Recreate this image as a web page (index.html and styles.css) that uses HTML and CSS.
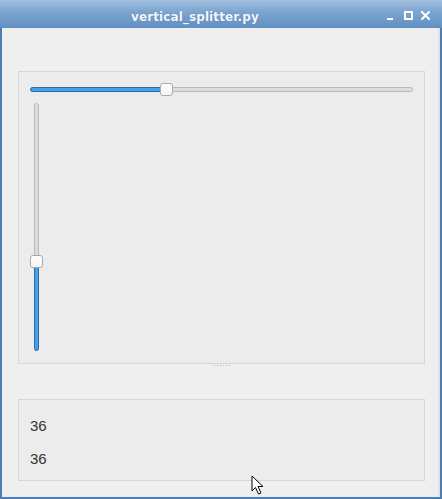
FILE: index.html
```html
<!DOCTYPE html>
<html>
<head>
<meta charset="utf-8">
<link rel="stylesheet" href="styles.css">
</head>
<body>
<div class="window">
  <div class="titlebar">
    <span class="title">vertical_splitter.py</span>
    <div class="controls">
      <span class="btn-min"></span>
      <span class="btn-max"></span>
      <svg class="btn-close" width="9" height="9" viewBox="0 0 9 9"><path d="M1 1 L8 8 M8 1 L1 8" stroke="#fff" stroke-width="2" stroke-linecap="square"/></svg>
    </div>
  </div>
  <div class="content">
    <div class="frame top-frame">
      <div class="hslider">
        <div class="hgroove"><div class="hfill" style="width:134px"></div></div>
        <div class="handle hhandle" style="left:130px"></div>
      </div>
      <div class="vslider">
        <div class="vgroove"><div class="vfill" style="height:94px"></div></div>
        <div class="handle vhandle" style="top:152px"></div>
      </div>
    </div>
    <div class="splitter">
      <span class="dot"></span><span class="dot"></span><span class="dot"></span><span class="dot"></span><span class="dot"></span><span class="dot"></span>
    </div>
    <div class="frame bottom-frame">
      <div class="label">36</div>
      <div class="label">36</div>
    </div>
  </div>
  <svg class="cursor" width="14" height="22" viewBox="0 0 14 22"><path d="M1 1 L1 16 L4.5 12.5 L7.5 19 L10 18 L7 11.5 L12 11.5 Z" fill="#fff" stroke="#000" stroke-width="1" stroke-linejoin="miter"/></svg>
</div>
</body>
</html>
```

FILE: styles.css
```css
html, body {
  margin: 0;
  padding: 0;
  width: 442px;
  height: 499px;
  overflow: hidden;
}
.window {
  position: relative;
  width: 442px;
  height: 499px;
  box-sizing: border-box;
  background: #4d7db3;
  display: flex;
  flex-direction: column;
  font-family: "Liberation Sans", Arial, sans-serif;
}
.titlebar {
  height: 28px;
  flex: none;
  background: linear-gradient(to bottom, #a3c1e0 0%, #7ea6d1 40%, #5f8fc2 100%);
  display: flex;
  align-items: center;
  position: relative;
}
.title {
  margin-left: 131px;
  margin-top: 6px;
  color: #f4f7fb;
  font-family: "DejaVu Sans", sans-serif;
  font-weight: bold;
  font-size: 12px;
  letter-spacing: 0.1px;
  text-shadow: 0 0 1px rgba(40,70,110,0.5);
}
.controls {
  margin-left: auto;
  margin-right: 12px;
  margin-top: 2px;
  display: flex;
  align-items: center;
  gap: 8px;
}
.btn-min {
  width: 6px;
  height: 2px;
  background: #fff;
  margin-top: 8px;
  margin-right: 3px;
}
.btn-max {
  width: 5px;
  height: 5px;
  border: 2px solid #fff;
}
.btn-close {
  display: block;
}
.content {
  flex: 1;
  margin: 0 2px 2px 2px;
  background: #efefef;
  border-right: 2px solid #e2e2e2;
  padding: 43px 13px 0 16px;
  display: flex;
  flex-direction: column;
}
.frame {
  border: 1px solid #d6d6d6;
  background: #ececec;
  box-sizing: border-box;
}
.top-frame {
  height: 293px;
  padding: 11px 11px 0 11px;
  display: flex;
  flex-direction: column;
  gap: 7px;
}
.hslider {
  position: relative;
  height: 13px;
  display: flex;
  align-items: center;
}
.hgroove {
  position: relative;
  flex: 1;
  height: 5px;
  box-sizing: border-box;
  border: 1px solid #b9b9b9;
  background: #dcdcdc;
  border-radius: 3px;
}
.hfill {
  position: absolute;
  left: -1px;
  top: -1px;
  height: 5px;
  box-sizing: border-box;
  background: #42a1e9;
  border: 1px solid #2d6da6;
  border-radius: 3px;
}
.handle {
  position: absolute;
  width: 13px;
  height: 13px;
  box-sizing: border-box;
  background: linear-gradient(#ffffff, #f4f4f4);
  border: 1px solid #a9a9a9;
  border-radius: 3px;
}
.hhandle {
  top: 0;
}
.vslider {
  position: relative;
  width: 13px;
  height: 248px;
  display: flex;
  justify-content: center;
}
.vgroove {
  position: relative;
  width: 5px;
  height: 100%;
  box-sizing: border-box;
  border: 1px solid #b9b9b9;
  background: #dcdcdc;
  border-radius: 3px;
}
.vfill {
  position: absolute;
  left: -1px;
  bottom: -1px;
  width: 5px;
  box-sizing: border-box;
  background: #42a1e9;
  border: 1px solid #2d6da6;
  border-radius: 3px;
}
.vhandle {
  left: 0;
}
.splitter {
  height: 35px;
  flex: none;
  display: flex;
  justify-content: center;
  gap: 2px;
  padding-top: 1px;
  box-sizing: border-box;
}
.dot {
  width: 1px;
  height: 1px;
  background: #b5b5b5;
}
.bottom-frame {
  height: 82px;
  padding: 9px 11px 0 11px;
}
.label {
  font-size: 15px;
  line-height: 33px;
  color: #333;
}
.cursor {
  position: absolute;
  left: 251px;
  top: 475px;
}
```
